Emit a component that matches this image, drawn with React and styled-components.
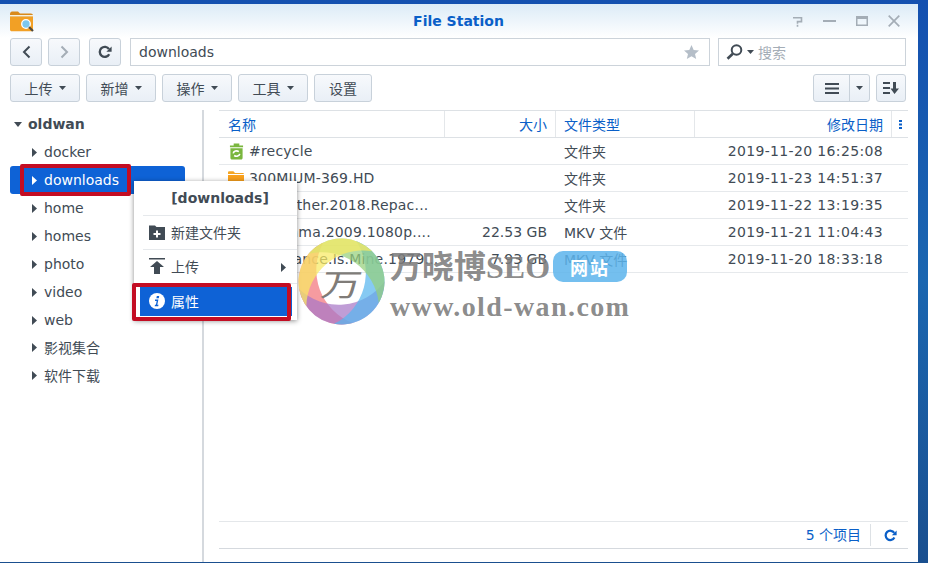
import styled, { createGlobalStyle } from "styled-components";

const GlobalStyle = createGlobalStyle`
  html, body {
    margin: 0;
    padding: 0;
    width: 928px;
    height: 563px;
    overflow: hidden;
  }
  body {
    font-family: "DejaVu Sans", "Noto Sans CJK SC", sans-serif;
    font-size: 14px;
    color: #414b55;
  }
  * {
    box-sizing: border-box;
  }
`;

const treeItems = ["docker", "downloads", "home", "homes", "photo", "video", "web", "影视集合", "软件下载"];

const files = [
  { name: "#recycle", type: "文件夹", date: "2019-11-20 16:25:08", recycle: true },
  { name: "300MIUM-369.HD", type: "文件夹", date: "2019-11-23 14:51:37" },
  { name: "My.Brother.2018.Repac...", type: "文件夹", date: "2019-11-22 13:19:35" },
  { name: "Panorama.2009.1080p....", size: "22.53 GB", type: "MKV 文件", date: "2019-11-21 11:04:43" },
  { name: "Vengeance.Is.Mine.1979...", size: "7.93 GB", type: "MKV 文件", date: "2019-11-20 18:33:18" },
];

const actions = ["上传", "新增", "操作", "工具"];

// logo swirl: overlapping crescents, mid angle in degrees clockwise from the top
const ringPieces = [
  { color: "#f2747c", mid: 250 },
  { color: "#a877c6", mid: 175 },
  { color: "#57b6ee", mid: 105 },
  { color: "#96d07c", mid: 35 },
  { color: "#f8ea62", mid: -40 },
];

const crescentPath = (mid) => {
  const r = 43;
  const point = (deg) => {
    const rad = (deg * Math.PI) / 180;
    return `${(43.5 + r * Math.sin(rad)).toFixed(2)} ${(43.5 - r * Math.cos(rad)).toFixed(2)}`;
  };
  return `M${point(mid - 85)}A${r} ${r} 0 0 1 ${point(mid + 85)}A57 57 0 0 0 ${point(mid - 85)}z`;
};

const Caret = () => (
  <svg width="7" height="4" viewBox="0 0 7 4">
    <path d="M0 0h7L3.5 4z" fill="#414b55" />
  </svg>
);

const RefreshIcon = ({ color = "#414b55", size = 14 }) => (
  <svg width={size} height={size} viewBox="0 0 14 14" fill="none">
    <path d="M11.2 9.2A5 5 0 1 1 11 4.2" stroke={color} strokeWidth="2.4" />
    <path d="M13.6 1.6v5.2H8.4z" fill={color} />
  </svg>
);

const FolderIcon = () => (
  <svg width="16" height="14" viewBox="0 0 16 14">
    <path d="M0 3V1.6C0 .7.6.2 1.4.2h4L7 2h7.6c.8 0 1.4.5 1.4 1.2V3z" fill="#f5a623" />
    <path d="M0 4h16v8.6c0 .8-.6 1.4-1.4 1.4H1.4C.6 14 0 13.4 0 12.6z" fill="#f9a01b" />
  </svg>
);

const RecycleIcon = () => (
  <svg width="15" height="17" viewBox="0 0 16 17">
    <path d="M5 0h6v2h4v2H1V2h4z" fill="#7ab63e" />
    <path d="M1.500 5h13v10.400c0 .9-.7 1.600-1.600 1.600H3.100c-.9 0-1.600-.7-1.600-1.600z" fill="#7ab63e" />
    <path d="M4.500 10.500C5 8 8 7 10.500 8.600M11.500 11c-.5 2.400-3.500 3.400-6 1.800" stroke="#fff" strokeWidth="1.700" fill="none" />
  </svg>
);

const App = () => {
  return (
    <>
      <GlobalStyle />
      <Desktop>
        <Window>
          <TitleBar>
            <AppIcon width="24" height="21" viewBox="0 0 24 21">
              <path d="M0 3c0-1.500 1-2.500 2-2.500h6L10 2.500h11c1 0 2 .7 2 2V6H0z" fill="#d98a1c" />
              <rect y="4" width="23" height="1.500" fill="#f7f1dc" />
              <path d="M0 6h23v12.500c0 1-.8 1.800-1.800 1.800H1.800C.8 20.300 0 19.500 0 18.500z" fill="#f2a025" />
              <circle cx="16" cy="13" r="4.300" fill="#7cc7ec" stroke="#fff" strokeWidth="1.300" />
              <path d="M19 16l4 4" stroke="#514a3c" strokeWidth="2.200" />
            </AppIcon>
            <Title>File Station</Title>
            <WindowControls>
              <svg width="11" height="11" viewBox="0 0 11 11" fill="none">
                <path d="M1 1.800h8.500v3.800H5.500v2.200M5.500 8.800v2" stroke="#a4adb6" strokeWidth="1.600" />
              </svg>
              <svg width="13" height="2" viewBox="0 0 13 2"><rect width="13" height="2" fill="#a4adb6" /></svg>
              <svg width="12" height="10" viewBox="0 0 12 10"><path d="M0 0h12v10H0zM1.500 3v5.500h9V3z" fill="#a4adb6" fillRule="evenodd" /></svg>
              <svg width="12" height="12" viewBox="0 0 12 12"><path d="M.7.7l10.600 10.600M11.300.7L.7 11.300" stroke="#a4adb6" strokeWidth="1.700" /></svg>
            </WindowControls>
          </TitleBar>

          <NavRow>
            <IconButton>
              <svg width="9" height="14" viewBox="0 0 9 14" fill="none"><path d="M7.500 1.500L2 7l5.500 5.500" stroke="#414b55" strokeWidth="2" /></svg>
            </IconButton>
            <IconButton>
              <svg width="9" height="14" viewBox="0 0 9 14" fill="none"><path d="M1.500 1.500L7 7l-5.500 5.500" stroke="#a4adb6" strokeWidth="2" /></svg>
            </IconButton>
            <RefreshButton>
              <RefreshIcon />
            </RefreshButton>
            <PathField>
              <span>downloads</span>
              <svg width="15" height="14" viewBox="0 0 15 14"><path d="M7.500 0l2.200 4.900 5.300.5-4 3.500 1.200 5.100-4.700-2.700L2.800 14 4 8.900 0 5.400l5.300-.5z" fill="#b5bec8" /></svg>
            </PathField>
            <SearchField>
              <svg width="17" height="16" viewBox="0 0 17 16" fill="none">
                <circle cx="10.500" cy="6" r="4.800" stroke="#414b55" strokeWidth="2" />
                <path d="M6.800 9.800L1.500 14.800" stroke="#414b55" strokeWidth="2.600" />
              </svg>
              <Caret />
              <SearchHint>搜索</SearchHint>
            </SearchField>
          </NavRow>

          <ActionRow>
            {actions.map((label) => (
              <ActionButton key={label}>
                {label}
                <Caret />
              </ActionButton>
            ))}
            <SettingsButton>设置</SettingsButton>
            <ViewGroup>
              <ViewMain>
                <svg width="14" height="11" viewBox="0 0 14 11"><path d="M0 0h14v2H0zM0 4.500h14v2H0zM0 9h14v2H0z" fill="#414b55" /></svg>
              </ViewMain>
              <ViewCaret>
                <Caret />
              </ViewCaret>
            </ViewGroup>
            <SortButton>
              <svg width="16" height="12" viewBox="0 0 16 12"><path d="M0 0h7v2H0zM0 5h7v2H0zM0 10h7v2H0zM10 0h3v6.500h3L11.500 12 7.500 6.500H10z" fill="#414b55" /></svg>
            </SortButton>
          </ActionRow>

          <Content>
            <Sidebar>
              <TreeRoot>
                <svg width="8" height="5" viewBox="0 0 8 5"><path d="M0 0h8L4 5z" fill="#414b55" /></svg>
                oldwan
              </TreeRoot>
              {treeItems.map((item, i) => (
                <TreeRow key={item} $active={item === "downloads"} $cjk={i > 6}>
                  <svg width="5" height="9" viewBox="0 0 5 9"><path d="M0 0l5 4.500L0 9z" fill={item === "downloads" ? "#fff" : "#414b55"} /></svg>
                  {item}
                  {item === "downloads" && <TreeFrame />}
                </TreeRow>
              ))}
            </Sidebar>

            <Main>
              <FileTable>
                <HeaderRow>
                  <NameHeader>名称</NameHeader>
                  <HeaderCell $right>大小</HeaderCell>
                  <HeaderCell>文件类型</HeaderCell>
                  <HeaderCell $right>修改日期</HeaderCell>
                  <MoreCell>
                    <svg width="3" height="9" viewBox="0 0 3 9"><path d="M0 0h3v2H0zM0 3.500h3v2H0zM0 7h3v2H0z" fill="#0a5fc8" /></svg>
                  </MoreCell>
                </HeaderRow>
                {files.map((file) => (
                  <FileRow key={file.name}>
                    <NameCell>
                      <IconSlot>{file.recycle ? <RecycleIcon /> : <FolderIcon />}</IconSlot>
                      {file.name}
                    </NameCell>
                    <SizeCell>{file.size}</SizeCell>
                    <TypeCell>{file.type}</TypeCell>
                    <DateCell>{file.date}</DateCell>
                  </FileRow>
                ))}
              </FileTable>
              <Footer>
                <ItemCount>5 个项目</ItemCount>
                <FooterRefresh>
                  <RefreshIcon color="#0a5fc8" size={13} />
                </FooterRefresh>
              </Footer>
            </Main>
          </Content>

          <ContextMenu>
            <MenuTitle>[downloads]</MenuTitle>
            <MenuItem>
              <svg width="16" height="16" viewBox="0 0 16 16"><path d="M0 1.500h6L7.500 3H16v13H0zM7 6.500v2.500H4.500v2H7v2.500h2V11h2.500V9H9V6.500z" fill="#414b55" fillRule="evenodd" /></svg>
              新建文件夹
            </MenuItem>
            <MenuItem>
              <svg width="16" height="16" viewBox="0 0 16 16"><path d="M0 0h16v1.500H0zM8 3l7 6h-4v7H5V9H1z" fill="#414b55" /></svg>
              上传
              <SubArrow width="5" height="9" viewBox="0 0 5 9"><path d="M0 0l5 4.500L0 9z" fill="#414b55" /></SubArrow>
            </MenuItem>
            <ActiveItem>
              <svg width="16" height="16" viewBox="0 0 16 16">
                <circle cx="8" cy="8" r="8" fill="#fff" />
                <path d="M7.800 3h2.400l-.4 2.200H7.400zM6 6.500h3.400L8.300 11.800h1.200l-.3 1.400H5.700l.3-1.400h.9l.8-3.900H6z" fill="#0e62d6" />
              </svg>
              属性
              <ItemFrame />
            </ActiveItem>
          </ContextMenu>

          <Watermark>
            <svg width="87" height="87" viewBox="0 0 87 87">
              {ringPieces.map((piece) => (
                <path key={piece.color} d={crescentPath(piece.mid)} fill={piece.color} opacity="0.72" />
              ))}
            </svg>
            <LogoGlyph>万</LogoGlyph>
            <BrandColumn>
              <BrandTop>
                <BrandName>万晓博SEO</BrandName>
                <BrandPill>网站</BrandPill>
              </BrandTop>
              <BrandUrl>www.old-wan.com</BrandUrl>
            </BrandColumn>
          </Watermark>
        </Window>
      </Desktop>
    </>
  );
};

export default App;

const Desktop = styled.div`
  width: 928px;
  height: 563px;
  padding-top: 4px;
  background: linear-gradient(#1450b0, #1b66b0 50%, #1a4f8f);
`;

const Window = styled.div`
  position: relative;
  width: 918px;
  height: 558px;
  display: flex;
  flex-direction: column;
  background: linear-gradient(#dcebf7, #ffffff 34px);
`;

const TitleBar = styled.div`
  height: 34px;
  flex: none;
  display: grid;
  grid-template-columns: 1fr auto 1fr;
  align-items: center;
  padding: 0 18px 0 17px;
`;

const AppIcon = styled.svg`
  display: block;
  margin-left: -7px;
`;

const Title = styled.div`
  font-weight: 700;
  font-size: 14px;
  color: #0a5fc8;
`;

const WindowControls = styled.div`
  display: flex;
  align-items: center;
  justify-content: flex-end;
  gap: 20px;
`;

const NavRow = styled.div`
  height: 28px;
  flex: none;
  display: flex;
  padding: 0 12px 0 10px;
`;

const buttonSkin = `
  border: 1px solid #c8d1da;
  border-radius: 3px;
  background: linear-gradient(#f7f9fc, #e9eff6);
`;

const IconButton = styled.div`
  ${buttonSkin}
  width: 32px;
  height: 28px;
  margin-right: 6px;
  display: flex;
  align-items: center;
  justify-content: center;
`;

const RefreshButton = styled(IconButton)`
  margin: 0 9px 0 3px;
`;

const PathField = styled.div`
  width: 580px;
  height: 28px;
  border: 1px solid #ccd3da;
  background: #fff;
  padding: 0 10px 0 8px;
  display: flex;
  align-items: center;
  justify-content: space-between;
`;

const SearchField = styled.div`
  width: 188px;
  height: 28px;
  margin-left: 8px;
  border: 1px solid #ccd3da;
  background: #fff;
  padding: 0 7px;
  display: flex;
  align-items: center;
  gap: 4px;
`;

const SearchHint = styled.span`
  color: #a4adb6;
  font-size: 14px;
`;

const ActionRow = styled.div`
  height: 28px;
  flex: none;
  margin-top: 8px;
  display: flex;
  padding: 0 12px 0 10px;
`;

const ActionButton = styled.div`
  ${buttonSkin}
  width: 70px;
  height: 28px;
  margin-right: 6px;
  display: flex;
  align-items: center;
  justify-content: center;
  gap: 6px;
`;

const SettingsButton = styled(ActionButton)`
  width: 58px;
  margin-right: auto;
`;

const ViewGroup = styled.div`
  ${buttonSkin}
  width: 57px;
  height: 28px;
  display: flex;
`;

const ViewMain = styled.div`
  width: 36px;
  border-right: 1px solid #c8d1da;
  display: flex;
  align-items: center;
  justify-content: center;
`;

const ViewCaret = styled.div`
  flex: 1;
  display: flex;
  align-items: center;
  justify-content: center;
`;

const SortButton = styled.div`
  ${buttonSkin}
  width: 30px;
  height: 28px;
  margin-left: 6px;
  display: flex;
  align-items: center;
  justify-content: center;
`;

const Content = styled.div`
  flex: 1;
  min-height: 0;
  margin-top: 8px;
  display: flex;
`;

const Sidebar = styled.div`
  width: 204px;
  flex: none;
  border-right: 2px solid #d5d9de;
`;

const TreeRoot = styled.div`
  height: 28px;
  padding-left: 14px;
  display: flex;
  align-items: center;
  gap: 6px;
  font-weight: 700;
`;

const TreeRow = styled.div`
  position: relative;
  width: 175px;
  height: 28px;
  margin-left: 10px;
  padding: 0 0 ${(props) => (props.$cjk ? "2px" : "0")} 22px;
  display: flex;
  align-items: center;
  gap: 7px;
  border-radius: 3px;
  background: ${(props) => (props.$active ? "#0e62d6" : "transparent")};
  color: ${(props) => (props.$active ? "#ffffff" : "#414b55")};
`;

const TreeFrame = styled.div`
  position: absolute;
  left: 10px;
  top: -2px;
  width: 111px;
  height: 32px;
  border: 4px solid #c30d23;
  border-radius: 2px;
`;

const Main = styled.div`
  flex: 1;
  min-width: 0;
  padding: 0 10px 13px 15px;
  display: flex;
  flex-direction: column;
`;

const FileTable = styled.div`
  flex: 1;
  border-top: 1px solid #dde1e5;
`;

const columns = `
  display: grid;
  grid-template-columns: 226px 111px 139px 197px 16px;
`;

const HeaderRow = styled.div`
  ${columns}
  height: 27px;
  border-bottom: 1px solid #dde1e5;
  color: #0a5fc8;
`;

const HeaderCell = styled.div`
  display: flex;
  align-items: center;
  justify-content: ${(props) => (props.$right ? "flex-end" : "flex-start")};
  padding: 0 8px;
  border-right: 1px solid #e4e7ea;
`;

const NameHeader = styled(HeaderCell)`
  padding-left: 9px;
`;

const MoreCell = styled.div`
  display: flex;
  align-items: center;
  justify-content: center;
`;

const FileRow = styled.div`
  ${columns}
  height: 27px;
  border-bottom: 1px solid #e6e9ec;
  align-items: center;
`;

const NameCell = styled.div`
  display: flex;
  align-items: center;
  gap: 5px;
  padding-left: 9px;
  letter-spacing: 0.2px;
  white-space: nowrap;
`;

const IconSlot = styled.span`
  width: 16px;
  display: flex;
  justify-content: center;
`;

const SizeCell = styled.div`
  text-align: right;
  padding-right: 9px;
`;

const TypeCell = styled.div`
  padding-left: 8px;
`;

const DateCell = styled.div`
  text-align: right;
  padding-right: 9px;
  letter-spacing: 0.35px;
  white-space: nowrap;
`;

const Footer = styled.div`
  height: 28px;
  flex: none;
  border-top: 1px solid #e4e7ea;
  border-bottom: 1px solid #d5d9de;
  display: flex;
  align-items: center;
  justify-content: flex-end;
  padding-right: 11px;
  color: #0a5fc8;
`;

const ItemCount = styled.span`
  padding-right: 9px;
  border-right: 1px solid #dde1e5;
  line-height: 22px;
`;

const FooterRefresh = styled.span`
  display: flex;
  margin-left: 13px;
`;

const ContextMenu = styled.div`
  position: absolute;
  left: 134px;
  top: 177px;
  width: 163px;
  height: 139px;
  padding: 0 0 0 9px;
  background: #fff;
  box-shadow: 0 1px 5px rgba(0, 0, 0, 0.45);
`;

const MenuTitle = styled.div`
  height: 35px;
  border-bottom: 1px solid #e6e9ec;
  display: flex;
  align-items: center;
  justify-content: center;
  font-weight: 700;
`;

const MenuItem = styled.div`
  position: relative;
  height: 34px;
  border-bottom: 1px solid #e6e9ec;
  padding: 0 0 2px 6px;
  display: flex;
  align-items: center;
  gap: 6px;
`;

const SubArrow = styled.svg`
  position: absolute;
  right: 11px;
  top: 13px;
`;

const ActiveItem = styled.div`
  position: relative;
  width: 152px;
  height: 29px;
  margin: 3px 0 0 -3px;
  padding: 0 0 2px 9px;
  display: flex;
  align-items: center;
  gap: 6px;
  color: #fff;
  background: #0e62d6;
`;

const ItemFrame = styled.div`
  position: absolute;
  left: -8px;
  top: -4px;
  width: 159px;
  height: 38px;
  border: 4px solid #c30d23;
  border-radius: 2px;
`;

const Watermark = styled.div`
  position: absolute;
  left: 298px;
  top: 234px;
  display: flex;
  align-items: center;
  gap: 5px;
  pointer-events: none;
`;

const LogoGlyph = styled.span`
  position: absolute;
  left: 24px;
  top: 25px;
  font-size: 40px;
  line-height: 40px;
  color: #807c78;
  font-family: "Noto Sans CJK SC", sans-serif;
  transform: scaleY(0.78) skewX(-8deg);
`;

const BrandColumn = styled.div`
  padding-top: 8px;
  display: flex;
  flex-direction: column;
  gap: 8px;
`;

const BrandTop = styled.div`
  display: flex;
  align-items: center;
  gap: 3px;
`;

const BrandName = styled.div`
  font-family: "Liberation Serif", "Noto Sans CJK SC", serif;
  font-weight: 700;
  font-size: 32px;
  line-height: 34px;
  color: rgba(125, 125, 125, 0.9);
`;

const BrandPill = styled.div`
  width: 74px;
  height: 31px;
  border-radius: 10px;
  background: rgba(92, 180, 236, 0.85);
  color: #fff;
  font-weight: 700;
  font-size: 18px;
  letter-spacing: 2px;
  display: flex;
  align-items: center;
  justify-content: center;
`;

const BrandUrl = styled.div`
  font-family: "Liberation Serif", serif;
  font-weight: 700;
  font-size: 28px;
  line-height: 30px;
  letter-spacing: 1.4px;
  color: rgba(125, 125, 125, 0.9);
`;
